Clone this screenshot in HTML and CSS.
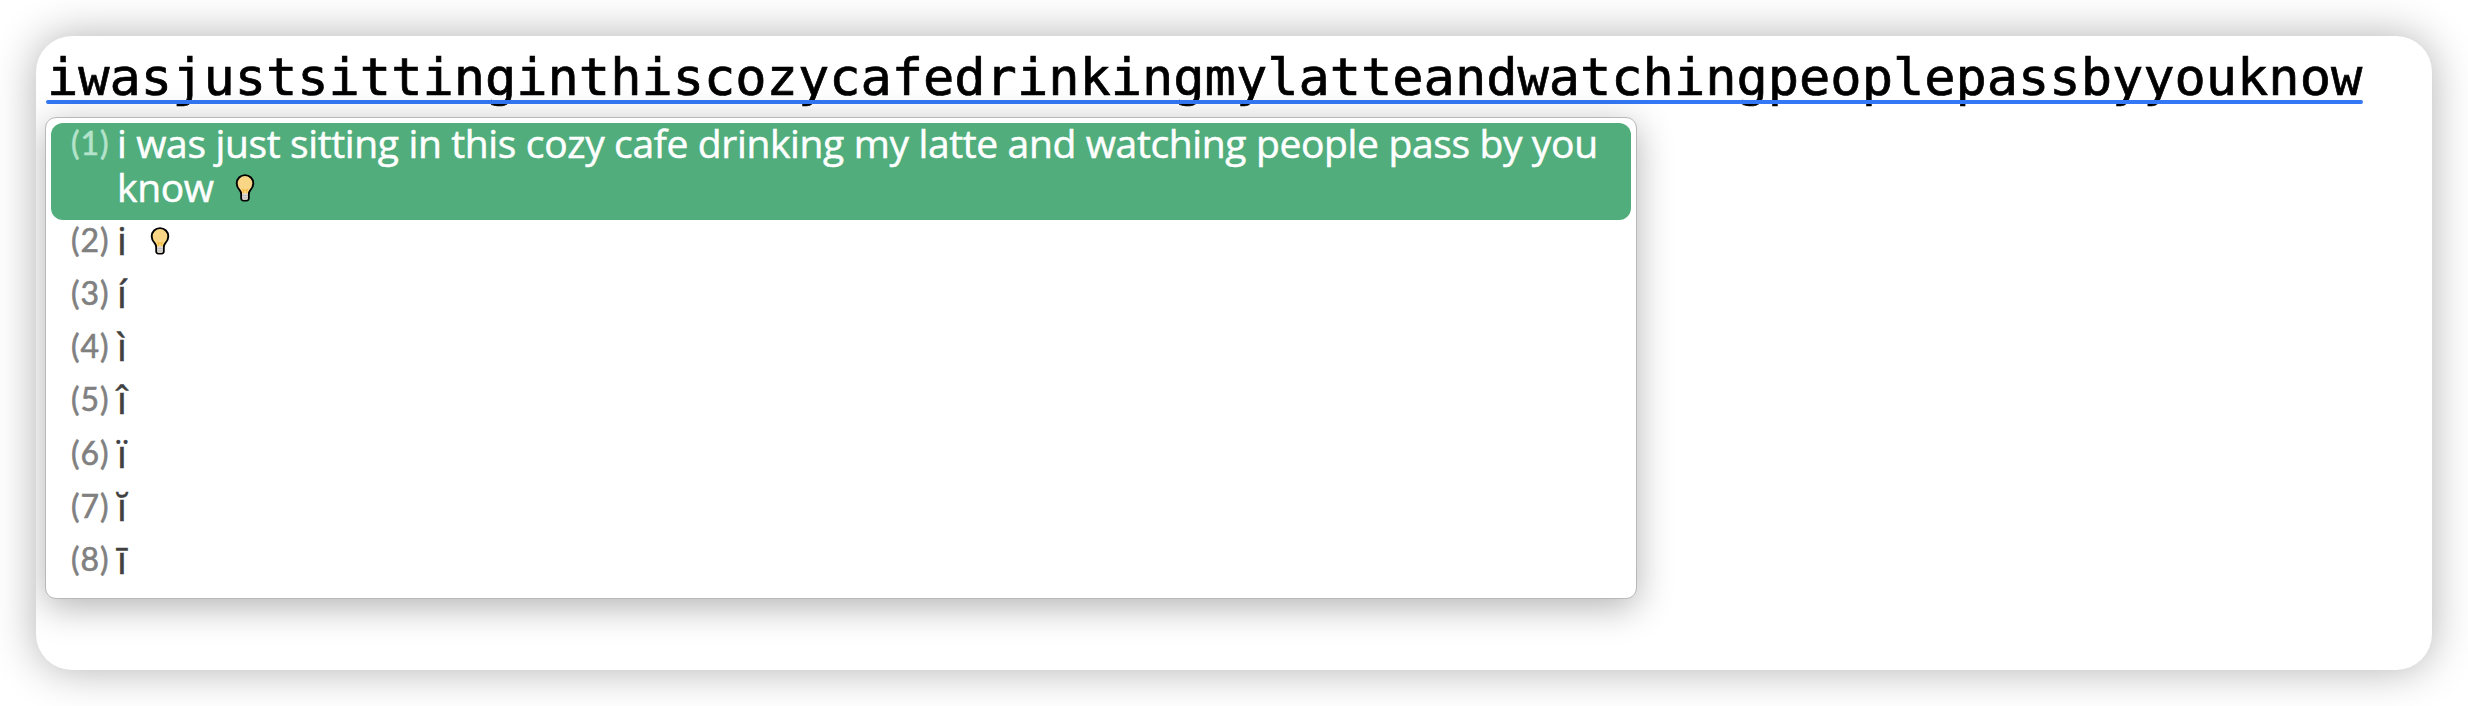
FILE: index.html
```
<!DOCTYPE html>
<html lang="en">
<head>
<meta charset="utf-8">
<title>Input candidates</title>
<link rel="stylesheet" href="styles.css">
</head>
<body>
<svg class="defs" width="0" height="0" aria-hidden="true">
  <symbol id="bulb" viewBox="0 0 20 28">
    <path d="M10 1.100a8.300 8.300 0 0 0-8.300 8.300c0 3.200 1.500 5.200 3.100 7 1.100 1.300 1.400 2.400 1.400 4v3.700q0 2.500 2.300 2.500h3q2.300 0 2.300-2.500v-3.700c0-1.600.3-2.700 1.400-4 1.600-1.800 3.100-3.800 3.100-7A8.300 8.300 0 0 0 10 1.100z" fill="#f9d686" stroke="#000" stroke-width="1.900"/>
    <path d="M7.200 19.400h5.600v5q0 1.400-1.400 1.400H8.600q-1.400 0-1.400-1.400z" fill="#d8d8d8"/>
    <path d="M7.200 21.500h5.600M7.200 23.800h5.600" stroke="#aaa" stroke-width=".6"/>
    <path d="M8.300 19v-4M11.700 19v-4M7.300 15l1 1.300h3.400l1-1.300" fill="none" stroke="#f6bd3e" stroke-width="1.100"/>
  </symbol>
</svg>
<main class="window">
  <div class="composition">iwasjustsittinginthiscozycafedrinkingmylatteandwatchingpeoplepassbyyouknow</div>
  <ol class="panel">
    <li class="row selected"><span class="num">(1)</span><span class="text">i was just sitting in this cozy cafe drinking my latte and watching people pass by you<br>know<svg class="bulb"><use href="#bulb"/></svg></span></li>
    <li class="row"><span class="num">(2)</span><span class="text">i<svg class="bulb"><use href="#bulb"/></svg></span></li>
    <li class="row"><span class="num">(3)</span><span class="text">í</span></li>
    <li class="row"><span class="num">(4)</span><span class="text">ì</span></li>
    <li class="row"><span class="num">(5)</span><span class="text">î</span></li>
    <li class="row"><span class="num">(6)</span><span class="text">ï</span></li>
    <li class="row"><span class="num">(7)</span><span class="text">ĭ</span></li>
    <li class="row"><span class="num">(8)</span><span class="text">ī</span></li>
  </ol>
</main>
</body>
</html>
```
FILE: styles.css
```
* { box-sizing: border-box; }
body {
  margin: 0;
  padding: 36px;
  height: 706px;
  background: #fff;
  overflow: hidden;
}
.defs { display: block; }
.window {
  height: 634px;
  padding: 10px;
  border-radius: 36px;
  background: #fff;
  box-shadow: 0 0 44px rgba(0, 0, 0, .31);
  overflow: hidden;
}
.composition {
  position: relative;
  width: 2317px;
  height: 58px;
  padding-left: 1px;
  line-height: 63px;
  font-family: "DejaVu Sans Mono", monospace;
  font-size: 52px;
  letter-spacing: -.02px;
  color: #000;
  -webkit-text-stroke: .7px #000;
  white-space: nowrap;
}
.composition::after {
  content: "";
  position: absolute;
  left: 0;
  right: 0;
  bottom: 0;
  height: 4px;
  border-radius: 2px;
  background: #3478f6;
}
.panel {
  position: relative;
  left: -1px;
  width: 1592px;
  height: 482px;
  margin: 13px 0 0;
  padding: 5px 5px 4px;
  list-style: none;
  border: 1px solid #b8b8b8;
  border-radius: 11px;
  background: #fff;
  box-shadow: 0 8px 36px rgba(0, 0, 0, .3);
}
.row {
  display: flex;
  height: 53.3px;
  padding-left: 20px;
  border-radius: 12px;
  color: #404040;
}
.row.selected {
  height: 96.5px;
  background: #51ae7c;
  color: #fff;
}
.num {
  flex: none;
  width: 46px;
  line-height: 40px;
  font-family: Lato, sans-serif;
  font-size: 32px;
  letter-spacing: 1px;
  color: #808080;
  -webkit-text-stroke: .6px currentColor;
}
.selected .num { color: #b4e3cb; }
.text {
  margin-top: -2px;
  line-height: 44px;
  font-family: "Open Sans", sans-serif;
  font-size: 39px;
  letter-spacing: -.36px;
  -webkit-text-stroke: .5px currentColor;
  white-space: nowrap;
}
.bulb {
  width: 20px;
  height: 28px;
  margin-left: 23px;
}
.selected .bulb { margin-left: 21px; }
```
